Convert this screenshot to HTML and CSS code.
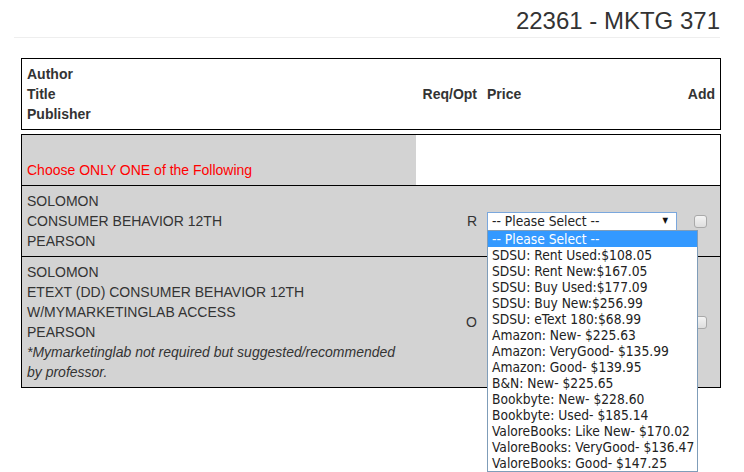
FILE: index.html
```html
<!DOCTYPE html>
<html lang="en">
<head>
<meta charset="utf-8">
<title>22361 - MKTG 371</title>
<link rel="stylesheet" href="styles.css">
</head>
<body>
<div class="page">
  <h1 class="title">22361 - MKTG 371</h1>
  <hr class="rule">

  <div class="tbl head">
    <div class="row">
      <div class="c1 bold">Author<br>Title<br>Publisher</div>
      <div class="c2 bold mid">Req/Opt</div>
      <div class="c3 bold mid">Price</div>
      <div class="c4 bold mid">Add</div>
    </div>
  </div>

  <div class="tbl body">
    <div class="row choose">
      <div class="c1 gray"><br><span class="red">Choose ONLY ONE of the Following</span></div>
      <div class="c2"></div>
      <div class="c3"></div>
      <div class="c4"></div>
    </div>

    <div class="row gray">
      <div class="c1">SOLOMON<br>CONSUMER BEHAVIOR 12TH<br>PEARSON</div>
      <div class="c2 mid">R</div>
      <div class="c3 mid">
        <div class="select">
          <span class="sel-text">-- Please Select --</span>
          <span class="sel-arrow">▼</span>
          <ul class="dd">
            <li class="on">-- Please Select --</li>
            <li>SDSU: Rent Used:$108.05</li>
            <li>SDSU: Rent New:$167.05</li>
            <li>SDSU: Buy Used:$177.09</li>
            <li>SDSU: Buy New:$256.99</li>
            <li>SDSU: eText 180:$68.99</li>
            <li>Amazon: New- $225.63</li>
            <li>Amazon: VeryGood- $135.99</li>
            <li>Amazon: Good- $139.95</li>
            <li>B&amp;N: New- $225.65</li>
            <li>Bookbyte: New- $228.60</li>
            <li>Bookbyte: Used- $185.14</li>
            <li>ValoreBooks: Like New- $170.02</li>
            <li>ValoreBooks: VeryGood- $136.47</li>
            <li>ValoreBooks: Good- $147.25</li>
          </ul>
        </div>
      </div>
      <div class="c4 mid"><span class="check"></span></div>
    </div>

    <div class="row gray">
      <div class="c1">SOLOMON<br>ETEXT (DD) CONSUMER BEHAVIOR 12TH W/MYMARKETINGLAB ACCESS<br>PEARSON<br><i>*Mymarketinglab not required but suggested/recommended by professor.</i></div>
      <div class="c2 mid">O</div>
      <div class="c3 mid"></div>
      <div class="c4 mid"><span class="check"></span></div>
    </div>
  </div>
</div>
</body>
</html>
```

FILE: styles.css
```css
* { box-sizing: border-box; }

html, body {
  margin: 0;
  padding: 0;
  background: #fff;
}

body {
  font-family: "Liberation Sans", Arial, sans-serif;
  font-size: 14px;
  line-height: 20px;
  color: #333;
  min-height: 472px;
}

.page {
  width: 720px;
  min-height: 472px;
  padding-left: 14px;
}

.title {
  margin: 8px 0 0;
  font-size: 24px;
  line-height: 26px;
  font-weight: normal;
  text-align: right;
  color: #333;
}

.rule {
  margin: 3px 0 0;
  border: 0;
  border-top: 1px solid #eee;
  height: 0;
}

.tbl {
  margin-left: 7px;
  width: 700px;
  border: 1px solid #000;
}

.head { margin-top: 20px; }
.body { margin-top: 4px; }

.row {
  display: grid;
  grid-template-columns: 394px 66px 204px 34px;
}

.row + .row { border-top: 1px solid #000; }

.row > div { padding: 5px; }

.gray { background: #d3d3d3; }

.bold { font-weight: bold; }

.mid {
  display: flex;
  align-items: center;
}

.c2 { justify-content: flex-end; }
.c4 { justify-content: flex-end; }

.red { color: #f00; }

.select {
  position: relative;
  width: 190px;
  height: 19px;
  border: 1px solid #7aa7dd;
  background: #fff;
  display: flex;
  align-items: center;
  justify-content: space-between;
  padding: 0 8px 0 4px;
  font-family: "DejaVu Sans Condensed", "DejaVu Sans", sans-serif;
  font-size: 13.7px;
  line-height: 16px;
  color: #222;
}

.sel-arrow {
  font-size: 8px;
  color: #111;
}

.dd {
  position: absolute;
  top: 100%;
  left: -1px;
  width: 211px;
  margin: 0;
  padding: 0;
  list-style: none;
  background: #fff;
  border: 1px solid #7f9db9;
  z-index: 10;
}

.dd li {
  height: 16px;
  padding-left: 4px;
  white-space: nowrap;
  color: #222;
}

.dd li.on {
  background: #3399ff;
  color: #fff;
}

.check {
  display: block;
  width: 13px;
  height: 13px;
  margin-right: 8px;
  border: 1px solid #a9a9a9;
  border-radius: 3px;
  background: linear-gradient(#f4f4f4, #dedede);
}
```
